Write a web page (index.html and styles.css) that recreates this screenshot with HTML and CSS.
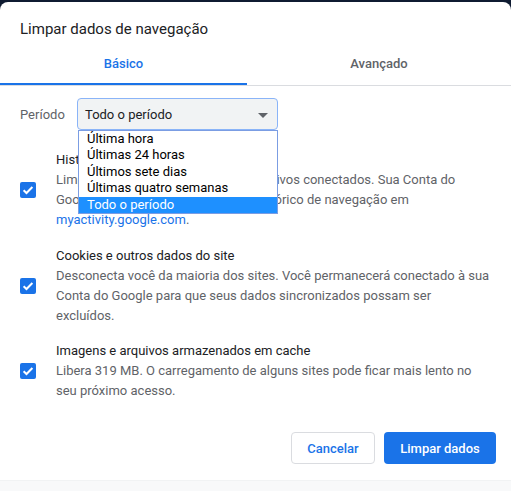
FILE: index.html
```html
<!DOCTYPE html>
<html lang="pt-BR">
<head>
<meta charset="utf-8">
<title>Limpar dados de navegação</title>
<link rel="stylesheet" href="styles.css">
</head>
<body>
<div class="dialog">
  <div class="title">Limpar dados de navegação</div>
  <div class="tabs">
    <div class="tab tab-first active">Básico</div>
    <div class="tab">Avançado</div>
  </div>
  <div class="content">
    <div class="period">
      <span class="period-label">Período</span>
      <div class="select">
        <span class="select-value">Todo o período</span>
        <span class="arrow"></span>
        <ul class="options">
          <li>Última hora</li>
          <li>Últimas 24 horas</li>
          <li>Últimos sete dias</li>
          <li>Últimas quatro semanas</li>
          <li class="selected">Todo o período</li>
        </ul>
      </div>
    </div>
    <div class="rows">
      <div class="row">
        <span class="check"><svg viewBox="0 0 16 16" width="16" height="16"><rect width="16" height="16" rx="2" fill="#1a73e8"/><path d="M3.6 8.2 6.5 11 12.4 5" fill="none" stroke="#fff" stroke-width="2"/></svg></span>
        <div class="text">
          <div class="row-title">Histórico de navegação</div>
          <div class="row-desc">Limpa o histórico de todos os dispositivos conectados. Sua Conta do Google pode ter outras formas de histórico de navegação em <a class="link">myactivity.google.com</a>.</div>
        </div>
      </div>
      <div class="row">
        <span class="check"><svg viewBox="0 0 16 16" width="16" height="16"><rect width="16" height="16" rx="2" fill="#1a73e8"/><path d="M3.6 8.2 6.5 11 12.4 5" fill="none" stroke="#fff" stroke-width="2"/></svg></span>
        <div class="text">
          <div class="row-title">Cookies e outros dados do site</div>
          <div class="row-desc">Desconecta você da maioria dos sites. Você permanecerá conectado à sua Conta do Google para que seus dados sincronizados possam ser excluídos.</div>
        </div>
      </div>
      <div class="row">
        <span class="check"><svg viewBox="0 0 16 16" width="16" height="16"><rect width="16" height="16" rx="2" fill="#1a73e8"/><path d="M3.6 8.2 6.5 11 12.4 5" fill="none" stroke="#fff" stroke-width="2"/></svg></span>
        <div class="text">
          <div class="row-title">Imagens e arquivos armazenados em cache</div>
          <div class="row-desc">Libera 319 MB. O carregamento de alguns sites pode ficar mais lento no seu próximo acesso.</div>
        </div>
      </div>
    </div>
  </div>
  <div class="buttons">
    <button class="btn cancel">Cancelar</button>
    <button class="btn primary">Limpar dados</button>
  </div>
  <div class="footer"></div>
</div>
</body>
</html>
```
FILE: styles.css
```css
* { box-sizing: border-box; }
html, body { margin: 0; padding: 0; }
body {
  background: #0f1b31;
  font-family: Roboto, "Liberation Sans", Arial, sans-serif;
  font-size: 13px;
  color: #202124;
  height: 491px;
  overflow: hidden;
  padding-top: 2px;
}
.dialog {
  background: #fff;
  border-radius: 8px 8px 0 0;
  height: 489px;
  display: flex;
  flex-direction: column;
}
.title {
  font-size: 15px;
  line-height: 20px;
  padding: 17px 20px 0;
  color: #202124;
}
.tabs {
  display: flex;
  margin-top: 5px;
  border-bottom: 1px solid #dadce0;
}
.tab {
  flex: 1;
  text-align: center;
  height: 41px;
  line-height: 39px;
  font-weight: 500;
  color: #5f6368;
  border-bottom: 2px solid transparent;
}
.tab-first {
  flex: none;
  width: 247px;
}
.tab.active {
  color: #1a73e8;
  border-bottom-color: #1a73e8;
}
.content {
  padding: 12px 20px 0;
}
.period {
  display: flex;
  align-items: center;
}
.period-label {
  width: 57px;
  color: #5f6368;
}
.select {
  position: relative;
  width: 201px;
  height: 32px;
  background: #f1f3f4;
  border: 1px solid #8ab4f8;
  border-radius: 4px;
  display: flex;
  align-items: center;
  padding-left: 7px;
  color: #202124;
}
.arrow {
  position: absolute;
  right: 9px;
  top: 14px;
  width: 0;
  height: 0;
  border-left: 5px solid transparent;
  border-right: 5px solid transparent;
  border-top: 5px solid #5f6368;
}
.options {
  position: absolute;
  left: 0;
  top: 31px;
  width: 200px;
  margin: 0;
  padding: 0;
  list-style: none;
  background: #fff;
  border: 1px solid #7b9de3;
  color: #000;
  z-index: 2;
}
.options li {
  height: 16.4px;
  line-height: 16.4px;
  padding-left: 8px;
  white-space: nowrap;
}
.options li.selected {
  background: #1e90ff;
  color: #fff;
}
.rows {
  margin-top: 20px;
  display: flex;
  flex-direction: column;
  gap: 15.5px;
}
.row {
  display: flex;
  align-items: center;
}
.check {
  width: 16px;
  height: 16px;
  margin-right: 20px;
  flex: none;
  display: block;
}
.check svg { display: block; }
.text {
  flex: 1;
  line-height: 20px;
}
.row-title { color: #202124; }
.row-desc { color: #5f6368; }
.link { color: #1a73e8; text-decoration: none; }
.buttons {
  display: flex;
  justify-content: flex-end;
  gap: 9px;
  padding: 0 15px 0 0;
  margin-top: auto;
  margin-bottom: 16px;
}
.btn {
  font-family: inherit;
  font-size: 13px;
  font-weight: 500;
  height: 32px;
  border-radius: 4px;
  cursor: pointer;
}
.cancel {
  width: 84px;
  background: #fff;
  color: #1a73e8;
  border: 1px solid #dadce0;
}
.primary {
  width: 112px;
  background: #1a73e8;
  color: #fff;
  border: none;
}
.footer {
  height: 11px;
  background: #f8f9fa;
  border-top: 1px solid #f1f3f4;
}
```
